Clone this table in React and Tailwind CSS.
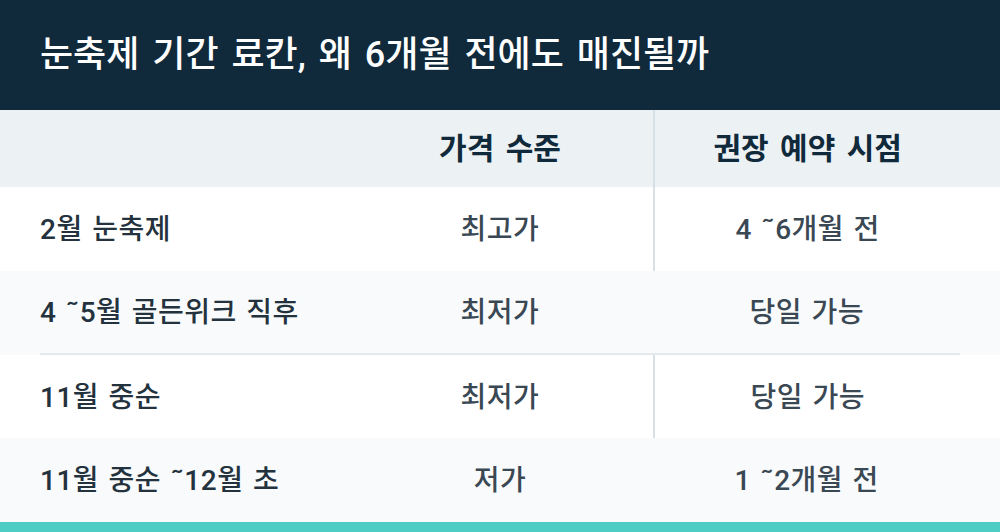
const rows = [
  { label: "2월 눈축제", price: "최고가", when: "4 ˜6개월 전", bg: "bg-white", line: true },
  { label: "4 ˜5월 골든위크 직후", price: "최저가", when: "당일 가능", bg: "bg-[#f8fafb]", bottom: true },
  { label: "11월 중순", price: "최저가", when: "당일 가능", bg: "bg-white", line: true },
  { label: "11월 중순 ˜12월 초", price: "저가", when: "1 ˜2개월 전", bg: "bg-[#f8fafb]" },
];

const App = () => {
  return (
    <div
      className="w-[1000px] h-[532px] flex flex-col overflow-hidden bg-white"
      style={{ fontFamily: 'Roboto, "Noto Sans CJK KR", "Noto Sans", sans-serif' }}
    >
      <header className="h-[110px] bg-[#102a3b] flex items-center px-10">
        <h1 className="text-white text-[36px] font-medium [word-spacing:4px]">
          눈축제 기간 료칸, 왜 6개월 전에도 매진될까
        </h1>
      </header>

      <div className="h-[78px] bg-[#ecf1f4] px-10 grid grid-cols-3 text-[#102a3b] text-[30px] font-bold [word-spacing:4px]">
        <div />
        <div className="flex items-center justify-center">가격 수준</div>
        <div className="flex items-center justify-center border-l-2 border-[#d6e0e6]">
          권장 예약 시점
        </div>
      </div>

      {rows.map((r, i) => (
        <div key={i} className={`${r.bg} h-[84px] px-10`}>
          <div
            className={`h-full grid grid-cols-3 text-[28px] font-medium tracking-[0.5px] [word-spacing:2px] ${
              r.bottom ? "border-b-2 border-[#e2e8ec]" : ""
            }`}
          >
            <div className="flex items-center pt-[2px] text-[#24323e]">{r.label}</div>
            <div className="flex items-center justify-center pt-[2px] text-[#3a4854]">{r.price}</div>
            <div
              className={`flex items-center justify-center pt-[2px] text-[#3a4854] ${
                r.line ? "border-l-2 border-[#d6e0e6]" : ""
              }`}
            >
              {r.when}
            </div>
          </div>
        </div>
      ))}

      <div className="h-[10px] bg-[#4ecdc4] mt-auto" />
    </div>
  );
};

export default App;
